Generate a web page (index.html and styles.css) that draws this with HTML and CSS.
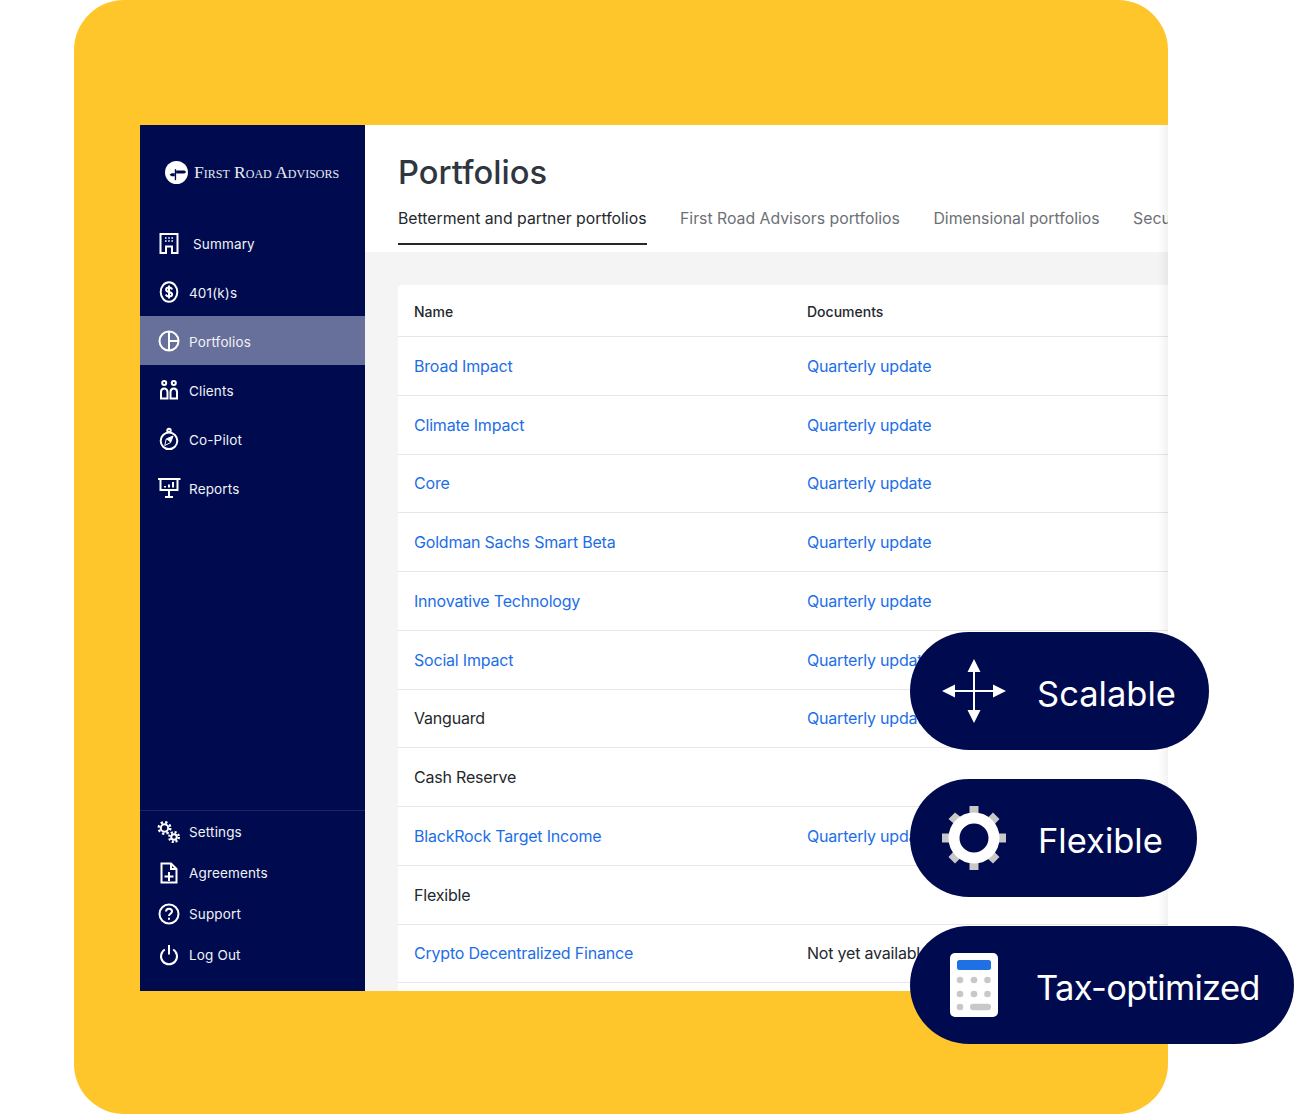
FILE: index.html
```html
<!DOCTYPE html>
<html>
<head>
  <title>Portfolios</title>
  <meta name="viewport" content="width=device-width, initial-scale=1">
  <link rel="stylesheet" href="styles.css">
</head>
<body>
  <div class="stage">
    <div class="card">
      <div class="app">
        <aside class="sidebar">
          <div class="logo">
            <svg class="logo-mark" viewBox="0 0 24 24">
              <circle cx="12" cy="12" r="12" fill="#fff"/>
              <path d="M10.200 8.500h1.400V20h-1.400z" fill="#000b4f"/>
              <path d="M11.600 10h8.600l2 1.500-2 1.500h-8.600zM10.200 12.800H6.800l-2 1.600 2 1.600h3.400z" fill="#000b4f"/>
            </svg>
            <span class="logo-text">First Road Advisors</span>
          </div>
          <nav class="nav-main">
            <a class="nav-item nav-item-wide">
              <svg class="icon" viewBox="0 0 22 22"><path d="M2.500 21V2h17v19h-5.500v-6.500h-6V21z"/><path class="dots" d="M7 6h1.600M10.200 6h1.600M13.400 6h1.600M7 9h1.600M10.200 9h1.600M13.400 9h1.600"/></svg>
              <span>Summary</span>
            </a>
            <a class="nav-item">
              <svg class="icon" viewBox="0 0 22 22"><ellipse cx="11" cy="11" rx="8.300" ry="9.800"/><path d="M14 8.500c-.3-1.300-1.500-2-3-2-1.700 0-2.900.9-2.900 2.200 0 2.900 6 1.600 6 4.600 0 1.300-1.300 2.200-3.100 2.200-1.500 0-2.700-.7-3.100-2M11 4.500v13"/></svg>
              <span>401(k)s</span>
            </a>
            <a class="nav-item active">
              <svg class="icon" viewBox="0 0 22 22"><circle cx="11" cy="11" r="9.500"/><path d="M11 1.500v19M11 11h9.500"/></svg>
              <span>Portfolios</span>
            </a>
            <a class="nav-item">
              <svg class="icon" viewBox="0 0 22 22"><circle cx="6.200" cy="4" r="2"/><circle cx="15.800" cy="4" r="2"/><path d="M3 19.500v-6.500c0-2 1.400-3.500 3.200-3.500S9.500 11 9.500 13v6.500zM12.500 19.500v-6.500c0-2 1.400-3.500 3.300-3.500S19 11 19 13v6.500z"/></svg>
              <span>Clients</span>
            </a>
            <a class="nav-item">
              <svg class="icon" viewBox="0 0 22 22"><circle cx="11" cy="12.800" r="8.300"/><circle cx="11" cy="2.400" r="1.700"/><path class="fine" d="M15 8l-2.400 6.600L6.800 17.500l1.400-6.500z"/><path class="solid" d="M15 8l-6.800 3 4.400 3.600z"/></svg>
              <span>Co-Pilot</span>
            </a>
            <a class="nav-item">
              <svg class="icon" viewBox="0 0 22 22"><path d="M0 2h22.500M2.500 2v11h17V2M11 13v6M7 20h8"/><path d="M7 10.500V9M11 10.500V7.500M15 10.500V5"/></svg>
              <span>Reports</span>
            </a>
          </nav>
          <nav class="nav-bottom">
            <a class="nav-item">
              <svg class="icon" viewBox="0 0 22 22">
                <circle cx="6.500" cy="7" r="3.700"/>
                <circle class="teeth" cx="6.500" cy="7" r="5.800" stroke-dasharray="2.300 2.255"/>
                <circle cx="16" cy="16" r="2.800"/>
                <circle class="teeth" cx="16" cy="16" r="4.800" stroke-dasharray="2 1.770"/>
              </svg>
              <span>Settings</span>
            </a>
            <a class="nav-item">
              <svg class="icon" viewBox="0 0 22 22"><path d="M3.500 1.500h9.500l5.500 5.500v13.500h-15zM13 1.500V7h5.500"/><path d="M11 10v9M6.500 14.500h9"/></svg>
              <span>Agreements</span>
            </a>
            <a class="nav-item">
              <svg class="icon" viewBox="0 0 22 22"><circle cx="11" cy="11" r="9.500"/><path d="M8 8.500C8 6.800 9.300 5.700 11 5.700s3 1.100 3 2.600c0 2.400-3 2.400-3 4.700M11 14.800v2"/></svg>
              <span>Support</span>
            </a>
            <a class="nav-item">
              <svg class="icon" viewBox="0 0 22 22"><path d="M6.800 5.500a8 8 0 1 0 8.400 0M11 1v9.500"/></svg>
              <span>Log Out</span>
            </a>
          </nav>
        </aside>
        <main class="main">
          <header class="header">
            <h1>Portfolios</h1>
            <div class="tabs">
              <a class="tab tab-active">Betterment and partner portfolios</a>
              <a class="tab">First Road Advisors portfolios</a>
              <a class="tab">Dimensional portfolios</a>
              <a class="tab">Securities</a>
            </div>
          </header>
          <section class="content">
            <div class="table">
              <div class="row row-head"><div class="col-name">Name</div><div>Documents</div></div>
              <div class="row"><a class="col-name link">Broad Impact</a><a class="link">Quarterly update</a></div>
              <div class="row"><a class="col-name link">Climate Impact</a><a class="link">Quarterly update</a></div>
              <div class="row"><a class="col-name link">Core</a><a class="link">Quarterly update</a></div>
              <div class="row"><a class="col-name link">Goldman Sachs Smart Beta</a><a class="link">Quarterly update</a></div>
              <div class="row"><a class="col-name link">Innovative Technology</a><a class="link">Quarterly update</a></div>
              <div class="row"><a class="col-name link">Social Impact</a><a class="link">Quarterly update</a></div>
              <div class="row"><div class="col-name">Vanguard</div><a class="link">Quarterly update</a></div>
              <div class="row"><div class="col-name">Cash Reserve</div></div>
              <div class="row"><a class="col-name link">BlackRock Target Income</a><a class="link">Quarterly update</a></div>
              <div class="row"><div class="col-name">Flexible</div></div>
              <div class="row"><a class="col-name link">Crypto Decentralized Finance</a><div>Not yet available</div></div>
              <div class="row"></div>
            </div>
          </section>
          <div class="edge-fade"></div>
        </main>
      </div>
    </div>

    <div class="pills">
      <div class="pill pill-scalable">
        <svg class="pill-icon" viewBox="0 0 64 64" fill="#fff">
          <path d="M31 8h2v48h-2zM8 31h48v2H8z"/>
          <path d="M32 0l6.500 13h-13zM32 64l-6.500-13h13zM0 32l13-6.500v13zM64 32l-13 6.500v-13z"/>
        </svg>
        <span>Scalable</span>
      </div>
      <div class="pill pill-flexible">
        <svg class="pill-icon" viewBox="0 0 64 64">
          <g fill="#c8c8c8">
            <path d="M27.500 0h9v10h-9zM27.500 54h9v10h-9zM0 27.500h10v9H0zM54 27.500h10v9H54z"/>
            <path d="M13 6.500l7.500 6-6.500 7-7.500-6.500zM51 6.500l6.500 6.500-6.500 7-6.500-7zM13 57.500l-6.500-6.500 6.500-7 6.500 7zM51 57.500l-6.500-6 6.500-7 6.500 6.500z"/>
          </g>
          <circle cx="32" cy="32" r="20" fill="none" stroke="#fff" stroke-width="11"/>
        </svg>
        <span>Flexible</span>
      </div>
      <div class="pill pill-tax">
        <svg class="pill-icon" viewBox="0 0 64 64">
          <rect x="8" width="48" height="64" rx="5" fill="#fff"/>
          <rect x="15" y="7" width="34" height="10" rx="2.500" fill="#1f6fe5"/>
          <g fill="#c8c8c8">
            <circle cx="18" cy="27" r="3.300"/><circle cx="32" cy="27" r="3.300"/><circle cx="45.500" cy="27" r="3.300"/>
            <circle cx="18" cy="41" r="3.300"/><circle cx="32" cy="41" r="3.300"/><circle cx="45.500" cy="41" r="3.300"/>
            <circle cx="18" cy="54" r="3.300"/><rect x="28" y="50.700" width="21" height="6.600" rx="3.300"/>
          </g>
        </svg>
        <span>Tax-optimized</span>
      </div>
    </div>
  </div>
</body>
</html>
```

FILE: styles.css
```css
* { box-sizing: border-box; }
html, body { margin: 0; background: #fff; }
body { font-family: Inter, "Noto Sans", sans-serif; }

.stage { position: relative; width: 1303px; height: 1114px; overflow: hidden; }

.card { margin-left: 74px; width: 1094px; height: 1114px; padding: 125px 0 123px 66px; background: #ffc62c; border-radius: 50px; }
.app { display: flex; height: 866px; overflow: hidden; }

.sidebar { display: flex; flex-direction: column; flex: 0 0 225px; background: #000b4f; color: #f1f2f6; }
.logo { display: flex; align-items: center; gap: 6px; height: 93px; padding: 1px 0 0 25px; }
.logo-mark { width: 23px; height: 23px; }
.logo-text { font-family: "Liberation Serif", serif; font-variant: small-caps; font-size: 17.500px; color: #e8e9ef; white-space: nowrap; }

.nav-main { flex: 1; }
.nav-main .nav-item { height: 49px; }
.nav-main .nav-item span { padding-top: 2px; }
.nav-main .active { background: #676f9b; }
.nav-item { display: flex; align-items: center; gap: 9px; padding-left: 18px; font-size: 13.500px; letter-spacing: 0.15px; }
.nav-item-wide { gap: 13px; }
.icon { flex: none; width: 22px; height: 22px; fill: none; stroke: #fff; stroke-width: 2; overflow: visible; }
.icon .dots { stroke-width: 1.500; }
.icon .fine { stroke-width: 1; }
.icon .solid { fill: #fff; stroke: none; }
.icon .teeth { stroke-width: 2.400; }

.nav-bottom { border-top: 1px solid #1c2562; padding: 0 0 16px; }
.nav-bottom .nav-item { height: 41px; }

.main { position: relative; flex: 1; display: flex; flex-direction: column; min-width: 0; background: #f4f4f4; }
.header { flex: none; background: #fff; height: 127px; padding: 27px 0 0 33px; }
h1 { margin: 0; font-size: 32.700px; line-height: 40px; font-weight: 500; color: #2f3640; }
.tabs { display: flex; gap: 33.500px; margin-top: 9px; white-space: nowrap; }
.tab { height: 44px; padding-top: 8px; font-size: 15.800px; line-height: 20px; color: #6d7075; }
.tab-active { color: #24282d; border-bottom: 2px solid #24282d; }

.content { flex: none; padding: 33px 0 0 33px; }
.table { background: #fff; border-radius: 4px 0 0 4px; font-size: 16px; letter-spacing: -0.2px; color: #24282d; }
.row { display: flex; align-items: center; height: 58.750px; border-bottom: 1px solid #e6e6e6; white-space: nowrap; }
.row-head { height: 52px; padding-top: 2px; font-size: 14px; letter-spacing: 0; font-weight: 500; }
.col-name { flex: 0 0 409px; padding-left: 16px; }
.link { color: #1d6ee6; }
.edge-fade { position: absolute; top: 0; right: 0; bottom: 0; width: 10px; background: linear-gradient(to right, rgba(0,0,0,0), rgba(0,0,0,0.05)); }

.pills { position: absolute; left: 910px; top: 632px; display: flex; flex-direction: column; align-items: flex-start; gap: 29px; }
.pill { display: flex; align-items: center; height: 118px; padding-left: 32px; border-radius: 59px; background: #000b4f; color: #fff; font-size: 34.500px; white-space: nowrap; }
.pill span { padding-top: 4px; }
.pill-icon { flex: none; width: 64px; height: 64px; }
.pill-scalable { width: 299px; gap: 31px; }
.pill-flexible { width: 287px; gap: 32px; }
.pill-tax { width: 384px; gap: 30px; letter-spacing: -0.7px; }
```
